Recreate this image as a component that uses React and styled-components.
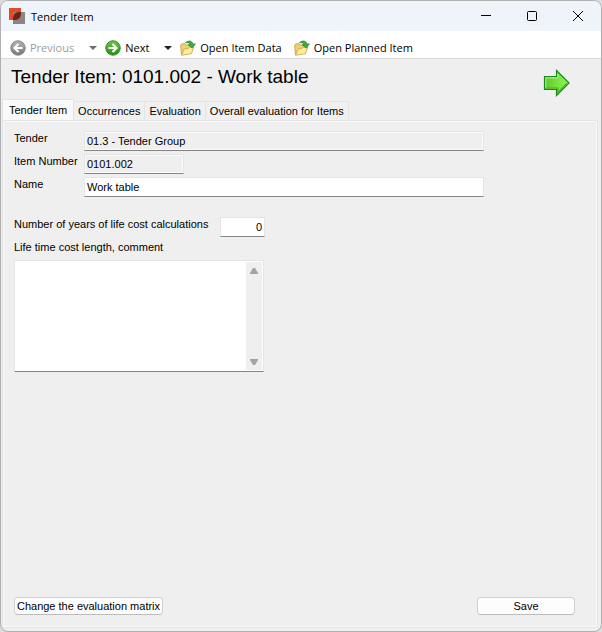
import React from 'react';
import styled, { createGlobalStyle } from 'styled-components';

const GlobalStyle = createGlobalStyle`
  * {
    box-sizing: border-box;
  }

  body {
    margin: 0;
    background-color: #dcdcdc;
    color: #000;
    font-family: "Liberation Sans", Arial, sans-serif;
    font-size: 11px;
  }

  button, input, textarea {
    font: inherit;
    color: inherit;
  }
`;

const Window = styled.div`
  display: flex;
  flex-direction: column;
  min-height: 100vh;
  border: 1px solid #b0b0b0;
  border-radius: 8px;
  background-color: #efefef;
  overflow: hidden;
`;

const TitleBar = styled.header`
  display: flex;
  align-items: center;
  height: 30px;
  padding-left: 8px;
  background-color: #eff3fa;
  font-family: "Open Sans", "Segoe UI", sans-serif;
  font-size: 11px;
`;

const WindowTitle = styled.span`
  flex: 1;
  padding-left: 6px;
`;

const WindowButton = styled.button`
  display: flex;
  align-items: center;
  justify-content: center;
  width: 46px;
  height: 30px;
  padding: 0;
  border: none;
  background: none;
`;

const Toolbar = styled.nav`
  display: flex;
  align-items: center;
  height: 28px;
  padding: 7px 9px 0;
  border-bottom: 1px solid #d9d9d9;
  background-color: #fff;
`;

const ToolButton = styled.button`
  display: flex;
  align-items: center;
  gap: 4px;
  margin-right: ${(props) => (props.$split ? 0 : 12)}px;
  padding: 0;
  border: none;
  background: none;
  color: ${(props) => (props.disabled ? '#9d9d9d' : '#000')};
  font-family: "Open Sans", "Segoe UI", sans-serif;
  font-size: 11px;
  line-height: 16px;
  white-space: nowrap;
`;

const DropButton = styled.button`
  display: flex;
  align-items: center;
  height: 16px;
  margin: 0 8px 0 15px;
  padding: 0;
  border: none;
  background: none;
`;

const Heading = styled.div`
  display: flex;
  justify-content: space-between;
  height: 40px;
  padding: 6px 30px 0 10px;
`;

const Title = styled.h1`
  margin: 0;
  font-size: 19px;
  font-weight: normal;
  line-height: 24px;
`;

const ArrowButton = styled.button`
  width: 28px;
  height: 30px;
  padding: 4px 0 0;
  border: none;
  background: none;
`;

const TabList = styled.div`
  display: flex;
  align-items: flex-end;
  padding-left: 1px;
`;

const Tab = styled.button`
  height: ${(props) => (props.$active ? 21 : 19)}px;
  padding: 0 ${(props) => (props.$active ? 6 : 4)}px;
  border: 1px solid #e4e4e4;
  border-bottom: none;
  border-left-width: ${(props) => (props.$active ? 1 : 0)}px;
  background-color: ${(props) => (props.$active ? '#f9f9f9' : '#f0f0f0')};
  line-height: 18px;
  white-space: nowrap;
`;

const Panel = styled.main`
  display: flex;
  flex: 1;
  flex-direction: column;
  margin: 0 3px 3px 1px;
  padding: 9px 21px 11px 10px;
  border: 2px solid #f9f9f9;
  outline: 1px solid #e4e4e4;
  outline-offset: -1px;
`;

const Field = styled.div`
  display: flex;
  height: 20px;
  margin-bottom: ${(props) => props.$gap ?? 3}px;
`;

const Label = styled.label`
  width: ${(props) => (props.$wide ? 206 : 70)}px;
  line-height: 14px;
  white-space: nowrap;
`;

const TextBox = styled.input`
  width: ${(props) => props.$width}px;
  height: 20px;
  padding: 0 2px;
  border: 1px solid #e5e5e5;
  border-bottom-color: #858585;
  border-radius: 1px;
  outline: none;
  background-color: ${(props) => (props.readOnly ? '#efefef' : '#fff')};
  box-shadow: ${(props) => (props.readOnly ? 'inset 0 0 0 1px #fafafa' : 'none')};
  text-align: ${(props) => props.$align || 'left'};
`;

const CommentBox = styled.div`
  display: flex;
  width: 250px;
  height: 112px;
  border: 1px solid #e5e5e5;
  border-bottom-color: #858585;
  border-radius: 1px;
  background-color: #fff;
`;

const Comment = styled.textarea`
  flex: 1;
  padding: 2px;
  border: none;
  outline: none;
  resize: none;
  background: none;
`;

const ScrollBar = styled.div`
  display: flex;
  flex-direction: column;
  justify-content: space-between;
  align-items: center;
  width: 16px;
  margin: 1px 1px 1px 0;
  padding: 6px 0 5px;
  background-color: #efefef;
`;

const Footer = styled.footer`
  display: flex;
  justify-content: space-between;
  margin-top: auto;
`;

const PushButton = styled.button`
  width: ${(props) => props.$width}px;
  height: 18px;
  padding: 0;
  border: 1px solid #d0d0d0;
  border-bottom-color: #bcbcbc;
  border-radius: 4px;
  background-color: #fdfdfd;
  line-height: 14px;
  white-space: nowrap;
`;

const LogoIcon = () => (
  <svg width="16" height="16" viewBox="0 0 16 16">
    <rect width="12" height="12" fill="#e24a2b" />
    <rect x="4" y="4" width="12" height="12" fill="#8a8584" />
    <path d="M4 12V9.500Q5 4 10.500 4H12v2.500Q11 12 5.500 12z" fill="#74200f" />
  </svg>
);

const RoundArrow = ({ id, back, light, dark, edge }) => (
  <svg width="16" height="16" viewBox="0 0 16 16">
    <defs>
      <linearGradient id={id} x1="0" y1="0" x2="0" y2="1">
        <stop offset="0" stopColor={light} />
        <stop offset="1" stopColor={dark} />
      </linearGradient>
    </defs>
    <circle cx="8" cy="8" r="7.2" fill={`url(#${id})`} stroke={edge} />
    <path
      d={back ? 'M12.500 8H5M8.500 4L4.500 8l4 4' : 'M3.500 8H11M7.500 4l4 4-4 4'}
      fill="none"
      stroke="#fff"
      strokeWidth="2.2"
    />
  </svg>
);

const Caret = ({ color }) => (
  <svg width="8" height="4" viewBox="0 0 8 4">
    <path d="M0 0h8L4 4z" fill={color} />
  </svg>
);

const FolderIcon = () => (
  <svg width="16" height="16" viewBox="0 0 16 16">
    <path d="M1.500 14.500L.6 5.500l1-1.500 3.400-.4 1.200 1.600 5.300-.4.700 3z" fill="#f0d070" stroke="#c79a36" strokeWidth=".8" />
    <path d="M1.600 15.300L4 9l4-.6 1.300-1.200 4.500-.5-2.300 7z" fill="#ffeb9e" stroke="#cda343" strokeWidth=".8" />
    <path d="M5.600 2.600Q8 .4 10.500 1.200q2.300.8 2.400 3l2.500-.4-3.200 4.300-4-3.300 2.300-.2Q9.800 2.200 5.600 2.600z" fill="#3fae3a" stroke="#1c7a20" strokeWidth=".7" />
  </svg>
);

const BigArrow = () => (
  <svg width="28" height="28" viewBox="0 0 28 28">
    <defs>
      <linearGradient id="big" x1="0" y1="0" x2="1" y2="0">
        <stop offset="0" stopColor="#5fc62c" />
        <stop offset="1" stopColor="#8dfa55" />
      </linearGradient>
    </defs>
    <path d="M1.500 7.500h12V1.500L26 14 13.500 26.500v-6h-12z" fill="url(#big)" stroke="#168a1c" strokeWidth="1.2" />
    <path d="M2.800 19V8.800h12V5" fill="none" stroke="#a4e880" strokeWidth="1.2" />
    <path d="M3 19h11.800v4.400l9-9" fill="none" stroke="#4eac20" strokeWidth="1.2" />
  </svg>
);

const tabs = ['Tender Item', 'Occurrences', 'Evaluation', 'Overall evaluation for Items'];

const App = () => {
  return (
    <>
      <GlobalStyle />
      <Window>
        {/* Title Bar */}
        <TitleBar>
          <LogoIcon />
          <WindowTitle>Tender Item</WindowTitle>
          <WindowButton aria-label="Minimize">
            <svg width="10" height="10"><path d="M0 4.500h10" stroke="#000" /></svg>
          </WindowButton>
          <WindowButton aria-label="Maximize">
            <svg width="10" height="10"><rect x=".5" y=".5" width="9" height="9" rx="1" fill="none" stroke="#000" /></svg>
          </WindowButton>
          <WindowButton aria-label="Close">
            <svg width="10" height="10"><path d="M0 0l10 10M10 0L0 10" stroke="#000" /></svg>
          </WindowButton>
        </TitleBar>

        {/* Toolbar */}
        <Toolbar>
          <ToolButton disabled $split>
            <RoundArrow id="prev" back light="#b5b5b5" dark="#777" edge="#808080" />
            Previous
          </ToolButton>
          <DropButton aria-label="Previous items">
            <Caret color="#6d6d6d" />
          </DropButton>
          <ToolButton $split>
            <RoundArrow id="next" light="#6fc445" dark="#1f9412" edge="#2c8a20" />
            Next
          </ToolButton>
          <DropButton aria-label="Next items">
            <Caret color="#222" />
          </DropButton>
          <ToolButton>
            <FolderIcon />
            Open Item Data
          </ToolButton>
          <ToolButton>
            <FolderIcon />
            Open Planned Item
          </ToolButton>
        </Toolbar>

        <Heading>
          <Title>Tender Item: 0101.002 - Work table</Title>
          <ArrowButton aria-label="Go to next">
            <BigArrow />
          </ArrowButton>
        </Heading>

        {/* Tabs */}
        <TabList role="tablist">
          {tabs.map((tab, index) => (
            <Tab key={tab} role="tab" aria-selected={index === 0} $active={index === 0}>
              {tab}
            </Tab>
          ))}
        </TabList>

        <Panel>
          <Field>
            <Label htmlFor="tender">Tender</Label>
            <TextBox id="tender" $width={400} defaultValue="01.3 - Tender Group" readOnly />
          </Field>
          <Field>
            <Label htmlFor="number">Item Number</Label>
            <TextBox id="number" $width={100} defaultValue="0101.002" readOnly />
          </Field>
          <Field $gap={20}>
            <Label htmlFor="name">Name</Label>
            <TextBox id="name" $width={400} defaultValue="Work table" />
          </Field>
          <Field>
            <Label htmlFor="years" $wide>Number of years of life cost calculations</Label>
            <TextBox id="years" $width={45} $align="right" defaultValue="0" />
          </Field>
          <Field $gap={0}>
            <Label htmlFor="comment" $wide>Life time cost length, comment</Label>
          </Field>
          <CommentBox>
            <Comment id="comment" />
            <ScrollBar>
              <svg width="8" height="6"><path d="M0 6V5l3-5h2l3 5v1z" fill="#a3a3a3" /></svg>
              <svg width="8" height="6"><path d="M0 0v1l3 5h2l3-5V0z" fill="#a3a3a3" /></svg>
            </ScrollBar>
          </CommentBox>

          {/* Bottom Buttons */}
          <Footer>
            <PushButton $width={149}>Change the evaluation matrix</PushButton>
            <PushButton $width={98}>Save</PushButton>
          </Footer>
        </Panel>
      </Window>
    </>
  );
};

export default App;
